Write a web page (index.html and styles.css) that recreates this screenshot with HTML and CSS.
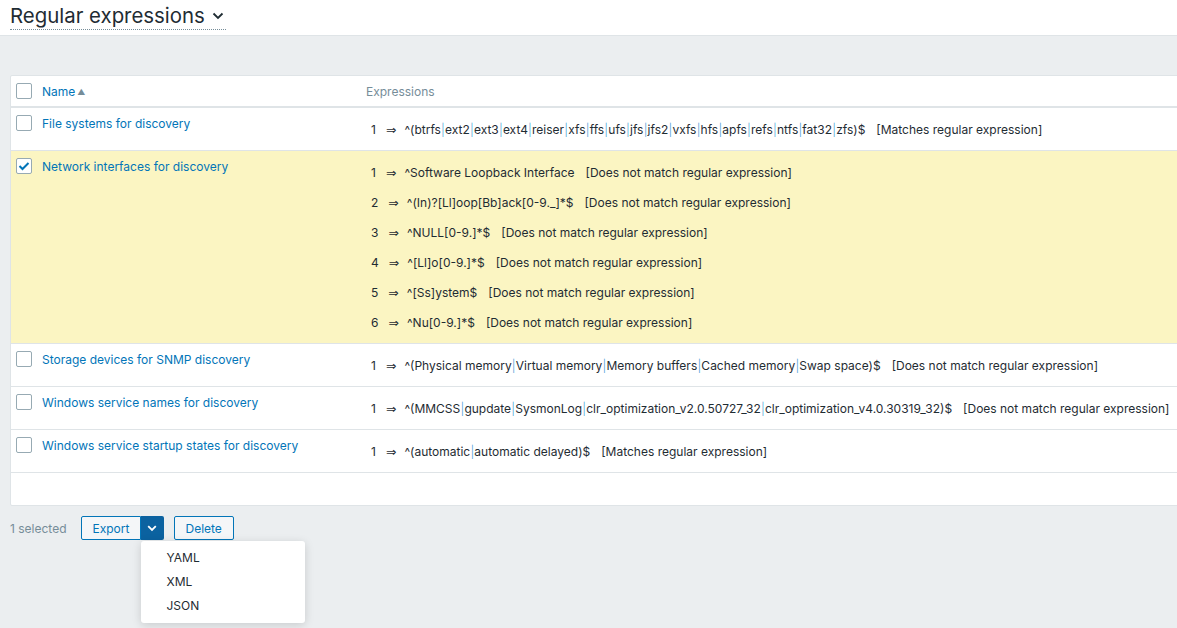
FILE: index.html
```html
<!DOCTYPE html>
<html lang="en">

<head>
    <meta charset="UTF-8">
    <meta name="viewport" content="width=device-width, initial-scale=1.0">
    <title>Regular expressions</title>
    <link rel="stylesheet" href="styles.css">
</head>

<body>
    <!-- page title -->
    <header class="page-header">
        <h1 class="page-title">Regular expressions <span class="chevron"><svg width="12" height="8" viewBox="0 0 12 8"><path d="M1.5 1.5 6 6l4.5-4.5" fill="none" stroke="#1f2c33" stroke-width="1.8"/></svg></span></h1>
    </header>

    <main class="content">
        <div class="list-box">
            <table class="list">
                <thead>
                    <tr>
                        <th class="col-check"><span class="cb"></span></th>
                        <th class="col-name"><a href="#">Name</a><span class="sort">&#9650;</span></th>
                        <th class="col-exp">Expressions</th>
                    </tr>
                </thead>
                <tbody>
                    <tr>
                        <td class="col-check"><span class="cb"></span></td>
                        <td class="col-name"><a href="#">File systems for discovery</a></td>
                        <td class="col-exp">
                            <div class="exp"><span class="num">1</span><span class="arr">&rArr;</span>^(btrfs<i>|</i>ext2<i>|</i>ext3<i>|</i>ext4<i>|</i>reiser<i>|</i>xfs<i>|</i>ffs<i>|</i>ufs<i>|</i>jfs<i>|</i>jfs2<i>|</i>vxfs<i>|</i>hfs<i>|</i>apfs<i>|</i>refs<i>|</i>ntfs<i>|</i>fat32<i>|</i>zfs)$<span class="res">[Matches regular expression]</span></div>
                        </td>
                    </tr>
                    <tr class="selected">
                        <td class="col-check"><span class="cb checked"><svg width="12" height="10" viewBox="0 0 12 10"><path d="M1.5 5 4.5 8 10.5 2" fill="none" stroke="#0275b8" stroke-width="2"/></svg></span></td>
                        <td class="col-name"><a href="#">Network interfaces for discovery</a></td>
                        <td class="col-exp">
                            <div class="exp"><span class="num">1</span><span class="arr">&rArr;</span>^Software Loopback Interface<span class="res">[Does not match regular expression]</span></div>
                            <div class="exp"><span class="num">2</span><span class="arr">&rArr;</span>^(In)?[Ll]oop[Bb]ack[0-9._]*$<span class="res">[Does not match regular expression]</span></div>
                            <div class="exp"><span class="num">3</span><span class="arr">&rArr;</span>^NULL[0-9.]*$<span class="res">[Does not match regular expression]</span></div>
                            <div class="exp"><span class="num">4</span><span class="arr">&rArr;</span>^[Ll]o[0-9.]*$<span class="res">[Does not match regular expression]</span></div>
                            <div class="exp"><span class="num">5</span><span class="arr">&rArr;</span>^[Ss]ystem$<span class="res">[Does not match regular expression]</span></div>
                            <div class="exp"><span class="num">6</span><span class="arr">&rArr;</span>^Nu[0-9.]*$<span class="res">[Does not match regular expression]</span></div>
                        </td>
                    </tr>
                    <tr>
                        <td class="col-check"><span class="cb"></span></td>
                        <td class="col-name"><a href="#">Storage devices for SNMP discovery</a></td>
                        <td class="col-exp">
                            <div class="exp"><span class="num">1</span><span class="arr">&rArr;</span>^(Physical memory<i>|</i>Virtual memory<i>|</i>Memory buffers<i>|</i>Cached memory<i>|</i>Swap space)$<span class="res">[Does not match regular expression]</span></div>
                        </td>
                    </tr>
                    <tr>
                        <td class="col-check"><span class="cb"></span></td>
                        <td class="col-name"><a href="#">Windows service names for discovery</a></td>
                        <td class="col-exp">
                            <div class="exp"><span class="num">1</span><span class="arr">&rArr;</span>^(MMCSS<i>|</i>gupdate<i>|</i>SysmonLog<i>|</i>clr_optimization_v2.0.50727_32<i>|</i>clr_optimization_v4.0.30319_32)$<span class="res">[Does not match regular expression]</span></div>
                        </td>
                    </tr>
                    <tr>
                        <td class="col-check"><span class="cb"></span></td>
                        <td class="col-name"><a href="#">Windows service startup states for discovery</a></td>
                        <td class="col-exp">
                            <div class="exp"><span class="num">1</span><span class="arr">&rArr;</span>^(automatic<i>|</i>automatic delayed)$<span class="res">[Matches regular expression]</span></div>
                        </td>
                    </tr>
                </tbody>
            </table>
        </div>

        <!-- mass actions -->
        <div class="actions">
            <span class="sel-count">1 selected</span>
            <div class="split">
                <button class="btn btn-left">Export</button>
                <button class="btn-toggle"><svg width="10" height="7" viewBox="0 0 10 7"><path d="M1.2 1.2 5 5l3.8-3.8" fill="none" stroke="#fff" stroke-width="1.8"/></svg></button>
                <ul class="menu">
                    <li>YAML</li>
                    <li>XML</li>
                    <li>JSON</li>
                </ul>
            </div>
            <button class="btn">Delete</button>
        </div>
    </main>
</body>

</html>
```

FILE: styles.css
```css
* {
    padding: 0;
    margin: 0;
    box-sizing: border-box;
}

ul {
    list-style: none;
}

html,
body {
    height: 100%;
}

body {
    font-family: Inter, "Liberation Sans", sans-serif;
    font-size: 12px;
    color: #1f2c33;
    background-color: #ebeef0;
    overflow: hidden;
}

a {
    color: #0275b8;
    text-decoration: none;
}

.page-header {
    height: 36px;
    background-color: #fff;
    border-bottom: 1px solid #dfe4e7;
    padding-left: 10px;
}

.page-title {
    display: inline-block;
    font-size: 20.4px;
    font-weight: 400;
    line-height: 26px;
    border-bottom: 1px dotted #768d99;
    padding-right: 2px;
}

.page-title .chevron {
    display: inline-block;
    margin-left: 1px;
    vertical-align: 3px;
}

.content {
    padding: 39px 0 0 10px;
}

.list-box {
    display: inline-block;
    min-width: 1200px;
    background-color: #fff;
    border: 1px solid #dfe4e7;
    border-radius: 2px;
    padding-bottom: 32px;
}

.list {
    width: 100%;
    border-collapse: collapse;
    white-space: nowrap;
}

.list th {
    height: 31px;
    text-align: left;
    font-weight: 400;
    color: #768d99;
    border-bottom: 2px solid #dfe4e7;
    vertical-align: middle;
}

.list td {
    border-bottom: 1px solid #dfe4e7;
    vertical-align: top;
}

.list tr.selected td {
    background-color: #fbf5c2;
}

.col-check {
    width: 31px;
    padding-left: 5px;
}

.list td.col-check {
    padding-top: 7px;
}

.col-name {
    width: 324px;
}

.list td.col-name {
    padding-top: 8px;
    line-height: 16px;
}

.list th.col-exp {
    padding-left: 0;
}

.list td.col-exp {
    padding: 7px 6px 5px 5px;
}

.sort {
    font-size: 8px;
    color: #768d99;
    margin-left: 2px;
    vertical-align: 1px;
}

.cb {
    display: block;
    width: 16px;
    height: 16px;
    border: 1px solid #97aab3;
    border-radius: 2px;
    background-color: #fff;
}

.cb.checked {
    display: flex;
    align-items: center;
    justify-content: center;
}

.exp {
    height: 30px;
    line-height: 30px;
}

.exp .num {
    margin-right: 10px;
}

.exp .arr {
    margin-right: 8px;
    font-family: "DejaVu Sans", sans-serif;
    font-size: 12.5px;
}

.exp i {
    font-style: normal;
    color: #4a9fd6;
    font-weight: 300;
    padding: 0 0.2px;
}

.exp .res {
    margin-left: 11px;
}

.actions {
    display: flex;
    align-items: center;
    height: 24px;
    margin-top: 7px;
}

.sel-count {
    color: #768d99;
    margin-right: 14px;
}

.split {
    display: flex;
    position: relative;
    margin-right: 10px;
}

.btn {
    height: 24px;
    padding: 0 11px;
    font-family: inherit;
    font-size: 12px;
    color: #0275b8;
    background-color: #f4f6f8;
    border: 1px solid #0275b8;
    border-radius: 2px;
}

.btn-left {
    width: 60px;
    border-radius: 2px 0 0 2px;
}

.btn-toggle {
    width: 23px;
    height: 24px;
    background-color: #0b62a0;
    border: 0;
    border-radius: 0 2px 2px 0;
    display: flex;
    align-items: center;
    justify-content: center;
}

.menu {
    position: absolute;
    left: 60px;
    top: 25px;
    width: 164px;
    padding: 5px 0;
    background-color: #fff;
    border-radius: 3px;
    box-shadow: 0 2px 10px rgba(0, 0, 0, 0.15);
}

.menu li {
    height: 24px;
    line-height: 24px;
    padding-left: 26px;
}
```
